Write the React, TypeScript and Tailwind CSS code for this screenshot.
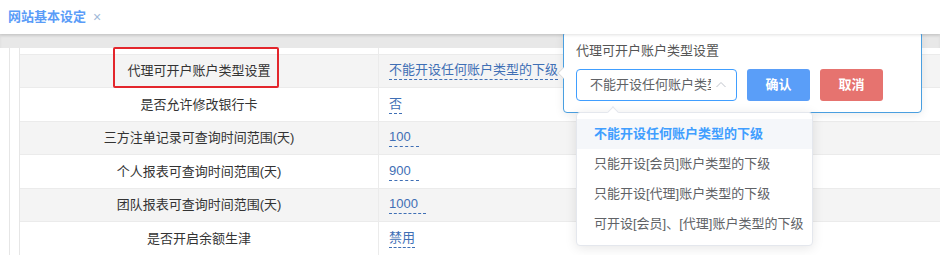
import React from "react";

const rows: { label: string; value: string; num?: boolean; h: string; gray: boolean }[] = [
  { label: "代理可开户账户类型设置", value: "不能开设任何账户类型的下级", h: "h-[33px]", gray: true },
  { label: "是否允许修改银行卡", value: "否", h: "h-[34px]", gray: false },
  { label: "三方注单记录可查询时间范围(天)", value: "100", num: true, h: "h-[33px]", gray: true },
  { label: "个人报表可查询时间范围(天)", value: "900", num: true, h: "h-[34px]", gray: false },
  { label: "团队报表可查询时间范围(天)", value: "1000", num: true, h: "h-[33px]", gray: true },
  { label: "是否开启余额生津", value: "禁用", h: "h-[34px]", gray: false },
];

const options = [
  "不能开设任何账户类型的下级",
  "只能开设[会员]账户类型的下级",
  "只能开设[代理]账户类型的下级",
  "可开设[会员]、[代理]账户类型的下级",
];

export default function App() {
  return (
    <div className="relative w-[940px] h-[255px] overflow-hidden bg-white font-['Liberation_Sans','Noto_Sans_CJK_SC',sans-serif] text-[13px]">
      {/* header tab */}
      <div className="relative z-10 h-[34px] flex items-center pl-[8px] bg-white shadow-[0_1px_3px_rgba(0,0,0,0.12)]">
        <span className="text-[#5a9cf8] font-bold leading-[16px]">网站基本设定</span>
        <span className="ml-[7px] text-[#9fb8d8] text-[14px] leading-[16px]">×</span>
      </div>
      {/* gray band */}
      <div className="h-[14px] bg-[#e8e8e8] shadow-[inset_0_2px_3px_rgba(0,0,0,0.06)]" />
      {/* content */}
      <div className="flex">
        <div className="w-[9px]" />
        <div className="w-[10px] border-l border-[#e6e6e6]" />
        <div className="flex-1 border-l border-[#e6e6e6]">
          <div className="grid grid-cols-[359px_1fr] h-[7px] border-b border-[#ebebeb]">
            <div className="border-r border-[#ebebeb]" />
            <div />
          </div>
          {rows.map((r) => (
            <div
              key={r.label}
              className={`grid grid-cols-[359px_1fr] ${r.h} border-b border-[#ebebeb] ${r.gray ? "bg-[#f4f4f4]" : "bg-white"}`}
            >
              <div className="flex items-center justify-center border-r border-[#ebebeb] text-[#333] leading-[16px]">
                {r.label}
              </div>
              <div className="flex items-center pl-[10px]">
                <span
                  className={`inline-block leading-[16px] pb-[1px] text-[#3f6fb5] border-b border-dashed border-[#3f6fb5] ${r.num ? "pr-[8px]" : ""}`}
                >
                  {r.value}
                </span>
              </div>
            </div>
          ))}
        </div>
      </div>

      {/* red annotation box */}
      <div className="absolute left-[113px] top-[47px] w-[166px] h-[41px] border-2 border-[#e3262c] rounded-[2px]" />

      {/* popover */}
      <div className="absolute left-[563px] top-[31px] w-[359px] h-[82px] bg-white border border-[#4a9fe0] rounded-[4px] shadow-[0_2px_10px_rgba(0,0,0,0.08)] px-[12px] pt-[11px]">
        <div className="absolute -left-[5px] top-[37px] w-[8px] h-[8px] bg-white rotate-45 border-l border-b border-[#dcdcdc]" />
        <div className="text-[#555] leading-[16px]">代理可开户账户类型设置</div>
        <div className="mt-[10px] flex items-center">
          <div className="w-[161px] h-[32px] border border-[#409eff] rounded-[4px] flex items-center pl-[13px] pr-[9px]">
            <span className="w-[121px] overflow-hidden whitespace-nowrap text-[#606266] leading-[16px]">
              不能开设任何账户类型的下级
            </span>
            <svg className="ml-auto" width="12" height="12" viewBox="0 0 12 12" fill="none">
              <path d="M1.5 8 L6 3.5 L10.5 8" stroke="#c0c4cc" strokeWidth="1" />
            </svg>
          </div>
          <button className="ml-[10px] w-[63px] h-[32px] rounded-[3px] bg-[#5a9ef8] text-white font-bold leading-[16px]">
            确认
          </button>
          <button className="ml-[10px] w-[63px] h-[32px] rounded-[3px] bg-[#e6736f] text-white font-bold leading-[16px]">
            取消
          </button>
        </div>
      </div>

      {/* dropdown */}
      <div className="absolute left-[576px] top-[112px] w-[237px] h-[134px] bg-white border border-[#e4e7ed] rounded-[4px] shadow-[0_2px_12px_rgba(0,0,0,0.1)] py-[6px]">
        <div className="absolute left-[32px] -top-[5px] w-[8px] h-[8px] bg-white rotate-45 border-l border-t border-[#e4e7ed]" />
        {options.map((o, i) => (
          <div
            key={o}
            className={`relative h-[30px] flex items-center pl-[17px] leading-[16px] whitespace-nowrap ${
              i === 0 ? "bg-[#f5f7fa] text-[#409eff] font-bold" : "text-[#606266]"
            }`}
          >
            {o}
          </div>
        ))}
      </div>
    </div>
  );
}
